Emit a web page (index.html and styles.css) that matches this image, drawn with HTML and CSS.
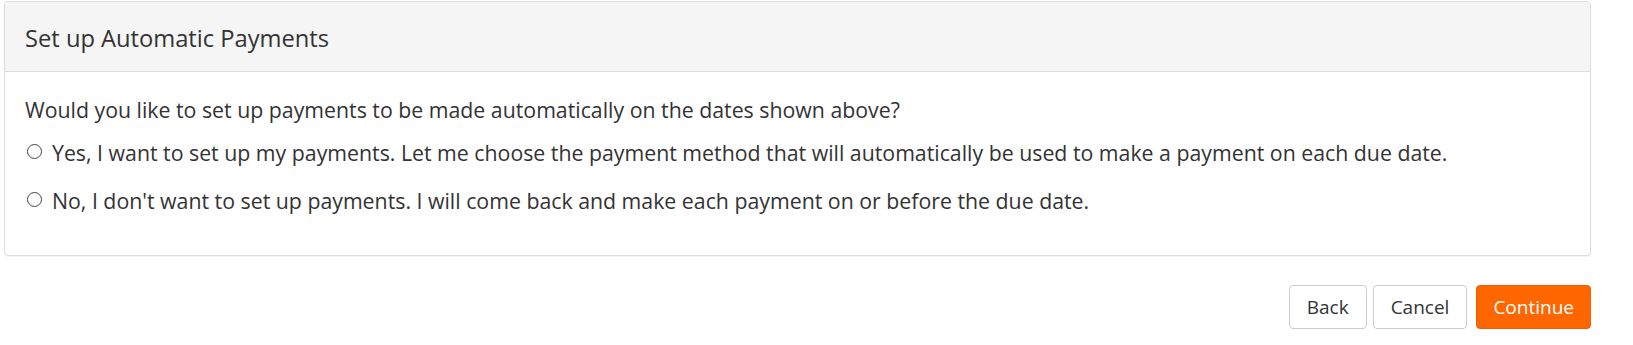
FILE: index.html
```html
<!DOCTYPE html>
<html lang="en">
<head>
<meta charset="utf-8">
<title>Set up Automatic Payments</title>
<link rel="stylesheet" href="styles.css">
</head>
<body>
<div class="page">
  <section class="panel">
    <header class="panel-heading">Set up Automatic Payments</header>
    <div class="panel-body">
      <p class="question">Would you like to set up payments to be made automatically on the dates shown above?</p>
      <label class="radio radio-first">
        <span class="radio-circle"></span>
        <span>Yes, I want to set up my payments. Let me choose the payment method that will automatically be used to make a payment on each due date.</span>
      </label>
      <label class="radio">
        <span class="radio-circle"></span>
        <span>No, I don't want to set up payments. I will come back and make each payment on or before the due date.</span>
      </label>
    </div>
  </section>
  <div class="actions">
    <button class="btn">Back</button>
    <button class="btn">Cancel</button>
    <button class="btn btn-primary">Continue</button>
  </div>
</div>
</body>
</html>
```
FILE: styles.css
```css
* { box-sizing: border-box; }
html, body { margin: 0; padding: 0; background: #fff; }
body {
  font-family: "Open Sans", "Noto Sans", "DejaVu Sans", sans-serif;
  color: #333;
}
.page {
  padding: 1px 42px 0 4px;
}
.panel {
  border: 1px solid #ddd;
  border-radius: 4px;
  background: #fff;
  box-shadow: 0 1px 1px rgba(0,0,0,0.05);
}
.panel-heading {
  height: 70px;
  background: #f5f5f5;
  border-bottom: 1px solid #ddd;
  border-radius: 3px 3px 0 0;
  padding: 3px 20px 0;
  display: flex;
  align-items: center;
  font-size: 23.7px;
  color: #333;
}
.panel-body {
  padding: 23px 20px 39px;
  font-size: 21.3px;
  line-height: 30px;
}
.question {
  margin: 0 0 13px;
}
.radio {
  display: flex;
  align-items: center;
  margin: 0;
}
.radio-first { margin-bottom: 18px; }
.radio-circle {
  width: 15px;
  height: 15px;
  border: 1.3px solid #444;
  border-radius: 50%;
  margin: -3px 10px 0 2px;
  flex: none;
}
.actions {
  display: flex;
  justify-content: flex-end;
  gap: 6px;
  margin-top: 29px;
}
.btn {
  font-family: inherit;
  font-size: 19px;
  height: 44px;
  padding: 0 17px;
  border: 1px solid #ccc;
  border-radius: 4px;
  background: #fff;
  color: #333;
}
.btn-primary {
  background: #ff6600;
  border-color: #f06000;
  color: #fff;
  padding: 0 16px;
  margin-left: 3px;
}
```
